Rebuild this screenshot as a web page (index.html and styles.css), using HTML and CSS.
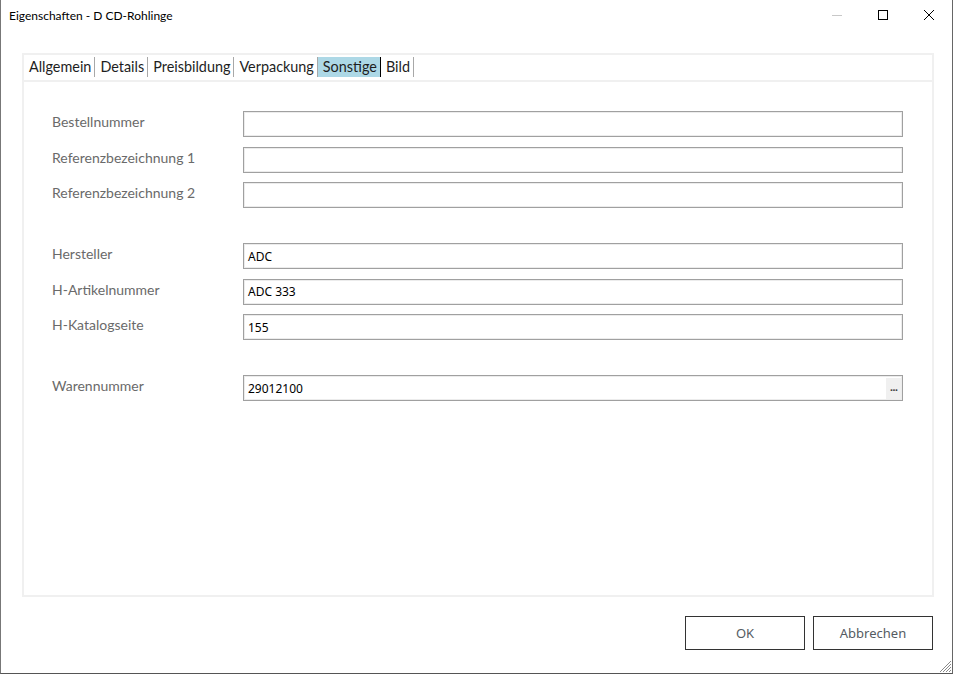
FILE: index.html
```html
<!DOCTYPE html>
<html lang="de">
<head>
<meta charset="utf-8">
<title>Eigenschaften - D CD-Rohlinge</title>
<link rel="stylesheet" href="styles.css">
</head>
<body>
<div class="window">
  <div class="titlebar">
    <span class="title">Eigenschaften - D CD-Rohlinge</span>
    <div class="controls">
      <span class="ctl"><svg width="12" height="12" viewBox="0 0 12 12"><line x1="1" y1="6.5" x2="11" y2="6.5" stroke="#c8c8c8" stroke-width="1"/></svg></span>
      <span class="ctl"><svg width="12" height="12" viewBox="0 0 12 12"><rect x="1.5" y="1.5" width="9" height="9" fill="none" stroke="#000" stroke-width="1"/></svg></span>
      <span class="ctl"><svg width="12" height="12" viewBox="0 0 12 12"><path d="M1 1 L11 11 M11 1 L1 11" stroke="#000" stroke-width="1"/></svg></span>
    </div>
  </div>
  <div class="main">
    <div class="panel">
      <div class="tabstrip">
        <span class="tab">Allgemein</span>
        <span class="tab">Details</span>
        <span class="tab">Preisbildung</span>
        <span class="tab">Verpackung</span>
        <span class="tab active">Sonstige</span>
        <span class="tab">Bild</span>
      </div>
      <div class="content">
        <div class="form">
          <label class="lbl">Bestellnummer</label><div class="field"></div>
          <label class="lbl">Referenzbezeichnung 1</label><div class="field"></div>
          <label class="lbl">Referenzbezeichnung 2</label><div class="field"></div>
          <div class="spacer"></div>
          <label class="lbl">Hersteller</label><div class="field">ADC</div>
          <label class="lbl">H-Artikelnummer</label><div class="field">ADC 333</div>
          <label class="lbl">H-Katalogseite</label><div class="field">155</div>
          <div class="spacer"></div>
          <label class="lbl">Warennummer</label><div class="field withbtn"><span>29012100</span><span class="ellipsis">...</span></div>
        </div>
      </div>
    </div>
    <div class="buttons">
      <button class="btn">OK</button>
      <button class="btn">Abbrechen</button>
    </div>
  </div>
  <svg class="grip" width="13" height="13" viewBox="0 0 13 13">
    <path d="M12 1 L1 12 M12 4 L4 12 M12 7 L7 12 M12 10 L10 12" stroke="#8a8a8a" stroke-width="1"/>
  </svg>
</div>
</body>
</html>
```
FILE: styles.css
```css
html, body {
  margin: 0;
  padding: 0;
  background: #ffffff;
}
body {
  width: 953px;
  height: 674px;
  overflow: hidden;
}
.window {
  position: relative;
  box-sizing: border-box;
  width: 953px;
  height: 674px;
  border-left: 1px solid #777777;
  border-right: 1px solid #666666;
  border-bottom: 1px solid #555555;
  background: #ffffff;
  display: flex;
  flex-direction: column;
}
.titlebar {
  height: 31px;
  display: flex;
  align-items: center;
  justify-content: space-between;
  padding-left: 8px;
  font-family: "Lato", "Noto Sans", sans-serif;
  font-size: 12px;
  color: #000;
}
.controls {
  display: flex;
  align-self: stretch;
}
.ctl {
  width: 46px;
  display: flex;
  align-items: center;
  justify-content: center;
}
.ctl svg {
  display: block;
  position: relative;
  top: -1px;
}
.main {
  flex: 1;
  display: flex;
  flex-direction: column;
  padding: 22px 18px 0 21px;
}
.panel {
  height: 544px;
  display: flex;
  flex-direction: column;
}
.tabstrip {
  height: 25px;
  border: 2px solid #f0f0f0;
  border-bottom: none;
  display: flex;
  align-items: center;
  padding-left: 0;
  font-family: "Lato", "Noto Sans", sans-serif;
  font-size: 14.4px;
  color: #1e1e1e;
}
.tab {
  height: 20px;
  line-height: 20px;
  padding: 0 3px 0 5px;
  border-right: 1px solid #a8a8a8;
  position: relative;
  top: -1px;
}
.tab.active {
  background: #add8e6;
  border-right-color: #000000;
}
.content {
  flex: 1;
  border: 2px solid #f0f0f0;
  padding: 29px 29px 0 28px;
}
.form {
  display: grid;
  grid-template-columns: 191px 1fr;
  row-gap: 9.5px;
  align-items: start;
}
.spacer {
  grid-column: 1 / span 2;
  height: 16px;
}
.lbl {
  font-family: "Lato", "Noto Sans", sans-serif;
  font-size: 14px;
  color: #6a6a6a;
  line-height: 20px;
  padding-top: 1px;
}
.field {
  box-sizing: border-box;
  height: 26px;
  border: 1px solid #a0a0a0;
  box-shadow: inset 0 0 0 1px #ececec;
  padding: 0 4px;
  display: flex;
  align-items: center;
  font-family: "Noto Sans", "DejaVu Sans", sans-serif;
  font-size: 12px;
  color: #000;
}
.field.withbtn {
  justify-content: space-between;
  padding-right: 1px;
}
.ellipsis {
  width: 15px;
  height: 21px;
  background: #f0f0f0;
  font-family: "DejaVu Sans", sans-serif;
  font-size: 9px;
  font-weight: bold;
  color: #444;
  display: flex;
  align-items: center;
  justify-content: center;
  letter-spacing: -1px;
}
.buttons {
  display: flex;
  justify-content: flex-end;
  gap: 8px;
  margin-top: 19px;
  padding-right: 1px;
}
.btn {
  box-sizing: border-box;
  width: 120px;
  height: 34px;
  border: 1px solid #333333;
  background: #ffffff;
  font-family: "Noto Sans", "DejaVu Sans", sans-serif;
  font-size: 13px;
  color: #555b62;
  padding: 0;
}
.grip {
  position: absolute;
  right: 0;
  bottom: 0;
}
```
